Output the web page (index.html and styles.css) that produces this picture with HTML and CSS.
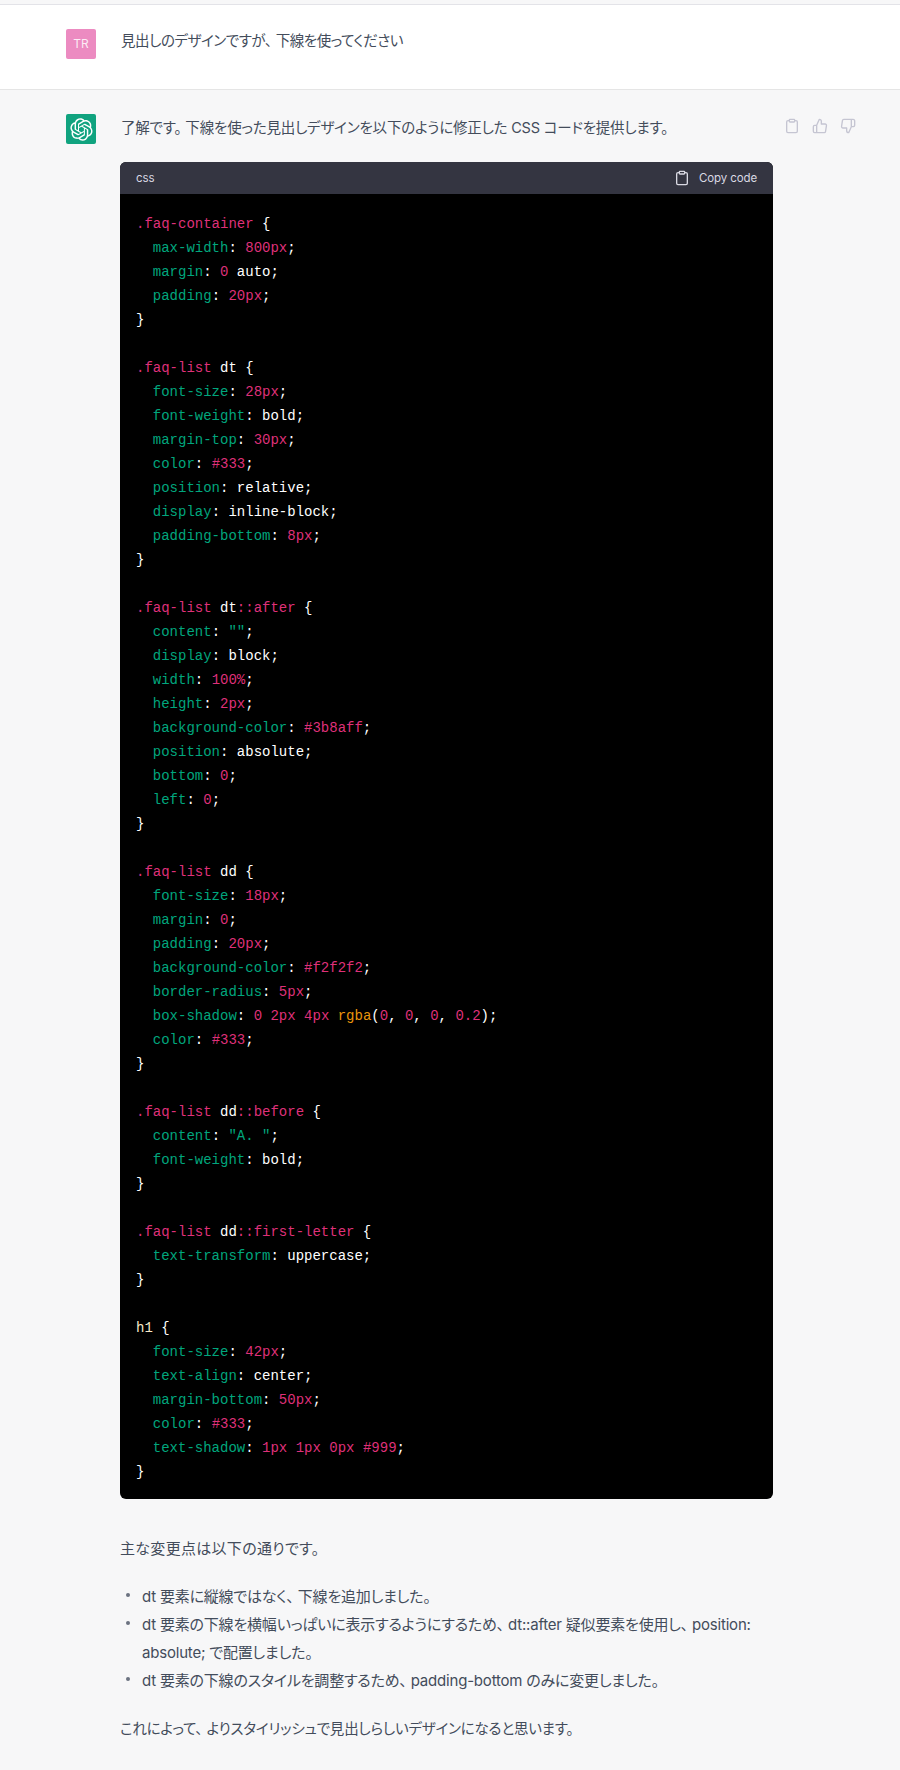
FILE: index.html
```html
<!DOCTYPE html>
<html lang="ja">
<head>
<meta charset="utf-8">
<title>Chat</title>
<link rel="stylesheet" href="styles.css">
</head>
<body>
<div class="topline"></div>
<section class="row user">
  <div class="avatar tr">TR</div>
  <div class="content"><p class="first up">見出しのデザインですが<span class="pu">、</span>下線を使ってください</p></div>
</section>
<section class="row bot">
  <div class="avatar gpt">
    <svg width="23" height="23" viewBox="0 0 41 41" fill="none"><path fill="#fff" d="M37.5324 16.8707C37.9808 15.5241 38.1363 14.0974 37.9886 12.6859C37.8409 11.2744 37.3934 9.91076 36.676 8.68622C35.6126 6.83404 33.9882 5.3676 32.0373 4.4985C30.0864 3.62941 27.9098 3.40259 25.8215 3.85078C24.8796 2.7893 23.7219 1.94125 22.4257 1.36341C21.1295 0.785575 19.7249 0.491269 18.3058 0.500197C16.1708 0.495044 14.0893 1.16803 12.3614 2.42214C10.6335 3.67624 9.34853 5.44666 8.6917 7.47815C7.30085 7.76286 5.98686 8.3414 4.8377 9.17505C3.68854 10.0087 2.73073 11.0782 2.02839 12.312C0.956464 14.1591 0.498905 16.2988 0.721698 18.4228C0.944492 20.5467 1.83612 22.5449 3.268 24.1293C2.81966 25.4759 2.66413 26.9026 2.81182 28.3141C2.95951 29.7256 3.40701 31.0892 4.12437 32.3138C5.18791 34.1659 6.8123 35.6322 8.76321 36.5013C10.7141 37.3704 12.8907 37.5973 14.9789 37.1492C15.9208 38.2107 17.0786 39.0587 18.3747 39.6366C19.6709 40.2144 21.0755 40.5087 22.4946 40.4998C24.6307 40.5054 26.7133 39.8321 28.4418 38.5772C30.1704 37.3223 31.4556 35.5506 32.1119 33.5179C33.5027 33.2332 34.8167 32.6547 35.9659 31.821C37.115 30.9874 38.0728 29.9178 38.7752 28.684C39.8458 26.8371 40.3023 24.6979 40.0789 22.5748C39.8556 20.4517 38.9639 18.4544 37.5324 16.8707ZM22.4978 37.8849C20.7443 37.8874 19.0459 37.2733 17.6994 36.1501C17.7601 36.117 17.8666 36.0586 17.936 36.0161L25.9004 31.4156C26.1003 31.3019 26.2663 31.137 26.3813 30.9378C26.4964 30.7386 26.5563 30.5124 26.5549 30.2825V19.0542L29.9213 20.998C29.9389 21.0068 29.9541 21.0198 29.9656 21.0359C29.977 21.052 29.9842 21.0707 29.9867 21.0902V30.3889C29.9842 32.375 29.1946 34.2791 27.7909 35.6841C26.3872 37.0892 24.4838 37.8806 22.4978 37.8849ZM6.39227 31.0064C5.51397 29.4888 5.19742 27.7107 5.49804 25.9832C5.55718 26.0187 5.66048 26.0818 5.73461 26.1244L13.699 30.7248C13.8975 30.8408 14.1233 30.902 14.3532 30.902C14.583 30.902 14.8088 30.8408 15.0073 30.7248L24.731 25.1103V28.9979C24.7321 29.0177 24.7283 29.0376 24.7199 29.0556C24.7115 29.0736 24.6988 29.0893 24.6829 29.1012L16.6317 33.7497C14.9096 34.7416 12.8643 35.0097 10.9447 34.4954C9.02506 33.9811 7.38785 32.7263 6.39227 31.0064ZM4.29707 13.6194C5.17156 12.0998 6.55279 10.9364 8.19885 10.3327C8.19885 10.4013 8.19491 10.5228 8.19491 10.6071V19.808C8.19351 20.0378 8.25334 20.2638 8.36823 20.4629C8.48312 20.6619 8.64893 20.8267 8.84863 20.9404L18.5723 26.5542L15.206 28.4979C15.1894 28.5089 15.1703 28.5155 15.1505 28.5173C15.1307 28.5191 15.1107 28.516 15.0924 28.5082L7.04046 23.8557C5.32135 22.8601 4.06716 21.2235 3.55289 19.3046C3.03862 17.3858 3.30624 15.3413 4.29707 13.6194ZM31.955 20.0556L22.2312 14.4411L25.5976 12.4981C25.6142 12.4872 25.6333 12.4805 25.6531 12.4787C25.6729 12.4769 25.6928 12.4801 25.7111 12.4879L33.7631 17.1364C34.9967 17.849 36.0017 18.8982 36.6606 20.1613C37.3194 21.4244 37.6047 22.849 37.4832 24.2684C37.3617 25.6878 36.8382 27.0432 35.9743 28.1759C35.1103 29.3086 33.9415 30.1717 32.6047 30.6641C32.6047 30.5947 32.6047 30.4733 32.6047 30.3889V21.188C32.6066 20.9586 32.5474 20.7328 32.4332 20.5338C32.319 20.3348 32.154 20.1698 31.955 20.0556ZM35.3055 15.0128C35.2464 14.9765 35.1431 14.9142 35.069 14.8717L27.1045 10.2712C26.906 10.1554 26.6803 10.0943 26.4504 10.0943C26.2206 10.0943 25.9948 10.1554 25.7963 10.2712L16.0726 15.8858V11.9982C16.0715 11.9783 16.0753 11.9585 16.0837 11.9405C16.0921 11.9225 16.1048 11.9068 16.1207 11.8949L24.1719 7.25025C25.4053 6.53903 26.8158 6.19376 28.2383 6.25482C29.6608 6.31589 31.0364 6.78077 32.2044 7.59508C33.3723 8.40939 34.2842 9.53945 34.8334 10.8531C35.3826 12.1667 35.5464 13.6095 35.3055 15.0128ZM14.2424 21.9419L10.8752 19.9981C10.8576 19.9893 10.8423 19.9763 10.8309 19.9602C10.8195 19.9441 10.8122 19.9254 10.8098 19.9058V10.6071C10.8107 9.18295 11.2173 7.78848 11.9819 6.58696C12.7466 5.38544 13.8377 4.42659 15.1275 3.82264C16.4173 3.21869 17.8524 2.99464 19.2649 3.1767C20.6775 3.35876 22.0089 3.93941 23.1034 4.85067C23.0427 4.88379 22.937 4.94215 22.8668 4.98473L14.9024 9.58517C14.7025 9.69878 14.5366 9.86356 14.4215 10.0626C14.3065 10.2616 14.2466 10.4877 14.2479 10.7175L14.2424 21.9419ZM16.071 17.9991L20.4018 15.4978L24.7325 17.9975V22.9985L20.4018 25.4983L16.071 22.9985V17.9991Z"/></svg>
  </div>
  <div class="content">
    <p class="first">了解です<span class="pu">。</span>下線を使った見出しデザインを以下のように修正した CSS コードを提供します。</p>
    <div class="code">
      <div class="code-head">
        <span class="lang">css</span>
        <span class="copy">
          <svg class="ico" viewBox="0 0 24 24" width="16" height="16" fill="none" stroke="currentColor" stroke-width="2" stroke-linecap="round" stroke-linejoin="round"><path d="M16 4h2a2 2 0 0 1 2 2v14a2 2 0 0 1-2 2H6a2 2 0 0 1-2-2V6a2 2 0 0 1 2-2h2"/><rect x="8" y="2" width="8" height="4" rx="1" ry="1"/></svg>
          Copy code
        </span>
      </div>
<pre class="code-body"><span class="k">.faq-container</span> {
  <span class="p">max-width</span>: <span class="k">800px</span>;
  <span class="p">margin</span>: <span class="k">0</span> auto;
  <span class="p">padding</span>: <span class="k">20px</span>;
}

<span class="k">.faq-list</span> dt {
  <span class="p">font-size</span>: <span class="k">28px</span>;
  <span class="p">font-weight</span>: bold;
  <span class="p">margin-top</span>: <span class="k">30px</span>;
  <span class="p">color</span>: <span class="k">#333</span>;
  <span class="p">position</span>: relative;
  <span class="p">display</span>: inline-block;
  <span class="p">padding-bottom</span>: <span class="k">8px</span>;
}

<span class="k">.faq-list</span> dt<span class="k">::after</span> {
  <span class="p">content</span>: <span class="p">""</span>;
  <span class="p">display</span>: block;
  <span class="p">width</span>: <span class="k">100%</span>;
  <span class="p">height</span>: <span class="k">2px</span>;
  <span class="p">background-color</span>: <span class="k">#3b8aff</span>;
  <span class="p">position</span>: absolute;
  <span class="p">bottom</span>: <span class="k">0</span>;
  <span class="p">left</span>: <span class="k">0</span>;
}

<span class="k">.faq-list</span> dd {
  <span class="p">font-size</span>: <span class="k">18px</span>;
  <span class="p">margin</span>: <span class="k">0</span>;
  <span class="p">padding</span>: <span class="k">20px</span>;
  <span class="p">background-color</span>: <span class="k">#f2f2f2</span>;
  <span class="p">border-radius</span>: <span class="k">5px</span>;
  <span class="p">box-shadow</span>: <span class="k">0</span> <span class="k">2px</span> <span class="k">4px</span> <span class="f">rgba</span>(<span class="k">0</span>, <span class="k">0</span>, <span class="k">0</span>, <span class="k">0.2</span>);
  <span class="p">color</span>: <span class="k">#333</span>;
}

<span class="k">.faq-list</span> dd<span class="k">::before</span> {
  <span class="p">content</span>: <span class="p">"A. "</span>;
  <span class="p">font-weight</span>: bold;
}

<span class="k">.faq-list</span> dd<span class="k">::first-letter</span> {
  <span class="p">text-transform</span>: uppercase;
}

<span class="t">h1</span> {
  <span class="p">font-size</span>: <span class="k">42px</span>;
  <span class="p">text-align</span>: center;
  <span class="p">margin-bottom</span>: <span class="k">50px</span>;
  <span class="p">color</span>: <span class="k">#333</span>;
  <span class="p">text-shadow</span>: <span class="k">1px</span> <span class="k">1px</span> <span class="k">0px</span> <span class="k">#999</span>;
}</pre>
    </div>
    <p class="after-code">主な変更点は以下の通りです。</p>
    <ul class="list">
      <li><span>dt 要素に縦線ではなく<span class="pu">、</span>下線を追加しました。</span></li>
      <li><span>dt 要素の下線を横幅いっぱいに表示するようにするため<span class="pu">、</span>dt::after 疑似要素を使用し<span class="pu">、</span>position: absolute; で配置しました。</span></li>
      <li><span>dt 要素の下線のスタイルを調整するため<span class="pu">、</span>padding-bottom のみに変更しました。</span></li>
    </ul>
    <p class="closing">これによって<span class="pu">、</span>よりスタイリッシュで見出しらしいデザインになると思います。</p>
  </div>
  <div class="actions">
    <svg class="ico" viewBox="0 0 24 24" width="16" height="16" fill="none" stroke="currentColor" stroke-width="2" stroke-linecap="round" stroke-linejoin="round"><path d="M16 4h2a2 2 0 0 1 2 2v14a2 2 0 0 1-2 2H6a2 2 0 0 1-2-2V6a2 2 0 0 1 2-2h2"/><rect x="8" y="2" width="8" height="4" rx="1" ry="1"/></svg>
    <svg class="ico" viewBox="0 0 24 24" width="16" height="16" fill="none" stroke="currentColor" stroke-width="2" stroke-linecap="round" stroke-linejoin="round"><path d="M14 9V5a3 3 0 0 0-3-3l-4 9v11h11.28a2 2 0 0 0 2-1.7l1.38-9a2 2 0 0 0-2-2.3zM7 22H4a2 2 0 0 1-2-2v-7a2 2 0 0 1 2-2h3"/></svg>
    <svg class="ico" viewBox="0 0 24 24" width="16" height="16" fill="none" stroke="currentColor" stroke-width="2" stroke-linecap="round" stroke-linejoin="round"><path d="M10 15v4a3 3 0 0 0 3 3l4-9V2H5.72a2 2 0 0 0-2 1.7l-1.38 9a2 2 0 0 0 2 2.3zm7-13h2.67A2.31 2.31 0 0 1 22 4v7a2.31 2.31 0 0 1-2.33 2H17"/></svg>
  </div>
</section>
</body>
</html>
```
FILE: styles.css
```css
* { box-sizing: border-box; }
html, body { margin: 0; padding: 0; }
body {
  width: 900px;
  min-height: 1770px;
  background: #f7f7f8;
  color: #434c5b;
  font-family: Inter, "Noto Sans CJK JP", sans-serif;
  font-size: 14.5px;
  letter-spacing: -0.2px;
  line-height: 28px;
  font-feature-settings: "palt";
}
p { margin: 0; }
.pu { margin-right: 4px; }
.topline { height: 5px; background: #f7f7f8; border-bottom: 1px solid #e3e3e8; }
.row { display: flex; gap: 24px; padding: 24px 0 24px 66px; }
.user { height: 85px; background: #fff; border-bottom: 1px solid #e5e5e5; }
.user .first { letter-spacing: -0.45px; }
.bot { background: #f7f7f8; }
.avatar {
  flex: none;
  width: 30px;
  height: 30px;
  border-radius: 2px;
  display: flex;
  align-items: center;
  justify-content: center;
  color: #fff;
}
.tr { background: #ec8bc1; color: rgba(255, 255, 255, 0.85); font: 12px/30px Inter, sans-serif; letter-spacing: 0; }
.gpt { background: #10a37f; }
.content { width: 653px; flex: none; }
.first { margin-left: 1px; }
.up { margin-top: -2px; }
.code { margin-top: 20px; border-radius: 6px; overflow: hidden; background: #000; }
.code-head {
  height: 32px;
  background: #343541;
  color: #d9d9e3;
  padding: 0 16px;
  display: flex;
  justify-content: space-between;
  align-items: center;
  font: 11.5px/16px Inter, "Liberation Sans", sans-serif;
  letter-spacing: -0.1px;
}
.copy { display: flex; align-items: center; gap: 9px; }
.code-body {
  margin: 0;
  padding: 18px 16px 14px;
  height: 1305px;
  color: #fff;
  font: 14px/24px "Liberation Mono", monospace;
  letter-spacing: 0;
  font-feature-settings: normal;
}
.k { color: #df3079; }
.p { color: #00a67d; }
.f { color: #e9950c; }
.t { color: #f8e8c8; }
.after-code { margin-top: 36px; font-size: 15px; letter-spacing: 0.3px; }
.list { margin: 20px 0 0; padding: 0 0 0 6px; list-style: none; font-size: 15px; }
.list li { display: flex; gap: 12px; }
.list li::before {
  content: "";
  flex: none;
  width: 4px;
  height: 4px;
  margin-top: 10px;
  border-radius: 50%;
  background: #6b7280;
}
.closing { margin-top: 20px; }
.actions { display: flex; gap: 12px; color: #c5c5d2; margin-left: -13px; height: 20px; padding-top: 4px; }
```
